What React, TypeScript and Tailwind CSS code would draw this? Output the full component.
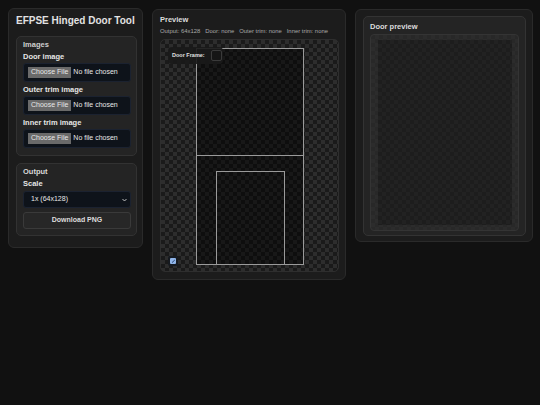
import React from "react";

const checker =
  "bg-[repeating-conic-gradient(#2d2d2d_0%_25%,#1a1a1a_0%_50%)] bg-[length:8px_8px]";

function FileField({ label }: { label: string }) {
  return (
    <div className="mt-[3px]">
      <p className="text-[7.5px] font-bold leading-[9px] text-[#e6e6e6]">{label}</p>
      <div className="mt-[2px] flex h-[19px] w-[108px] items-center rounded-[3px] border border-[#1b2230] bg-[#0e131a] pl-[4px]">
        <span className="flex h-[11px] items-center bg-[#6a6a6a] px-[3px] text-[7px] text-[#e8e8e8]">
          Choose File
        </span>
        <span className="ml-[2px] text-[7px] text-[#e8e8e8]">No file chosen</span>
      </div>
    </div>
  );
}

export default function App() {
  return (
    <div
      className="flex h-[405px] w-[540px] items-start gap-[9px] bg-[#111111] pl-[8px] pt-[8px]"
      style={{ fontFamily: '"Liberation Sans", Arial, sans-serif' }}
    >
      {/* controls */}
      <div className="flex h-[240px] w-[135px] flex-col rounded-[6px] border border-[#2a2a2a] bg-[#1c1c1c] px-[7px] pt-[5px]">
        <h1 className="whitespace-nowrap text-[10px] font-bold leading-[14px] text-[#e2e2e2]">
          EFPSE Hinged Door Tool
        </h1>
        <div className="mt-[8px] w-[121px] rounded-[5px] border border-[#323232] bg-[#242424] px-[6px] pb-[7px] pt-[3px]">
          <p className="text-[7.5px] font-bold leading-[9px] text-[#cfcfcf]">Images</p>
          <FileField label="Door image" />
          <FileField label="Outer trim image" />
          <FileField label="Inner trim image" />
        </div>
        <div className="mt-[7px] w-[121px] rounded-[5px] border border-[#323232] bg-[#242424] px-[6px] pb-[6px] pt-[3px]">
          <p className="text-[7.5px] font-bold leading-[9px] text-[#d8d8d8]">Output</p>
          <p className="mt-[3px] text-[7.5px] font-bold leading-[9px] text-[#e6e6e6]">Scale</p>
          <div className="mt-[3px] flex h-[17px] w-[108px] items-center justify-between rounded-[3px] border border-[#1b2230] bg-[#0e131a] pl-[7px] pr-[3px]">
            <span className="text-[7px] text-[#e8e8e8]">1x (64x128)</span>
            <svg width="5" height="4" viewBox="0 0 5 4">
              <path d="M0.5 1 L2.5 3 L4.5 1" stroke="#cfcfcf" strokeWidth="0.9" fill="none" />
            </svg>
          </div>
          <button
            type="button"
            className="mt-[4px] flex h-[17px] w-[108px] items-center justify-center rounded-[3px] border border-[#3a3a3a] bg-[#272727] text-[7px] font-bold text-[#dcdcdc]"
          >
            Download PNG
          </button>
        </div>
      </div>

      {/* preview */}
      <div className="mt-[1px] h-[271px] w-[194px] rounded-[6px] border border-[#2a2a2a] bg-[#1c1c1c] px-[7px] pt-[5px]">
        <p className="text-[7.5px] font-bold leading-[9px] text-[#dcdcdc]">Preview</p>
        <p className="mt-[3px] whitespace-nowrap text-[5.9px] leading-[8px] text-[#a8a8a8]">
          Output: 64x128&nbsp;&nbsp;&nbsp;Door: none&nbsp;&nbsp;&nbsp;Outer trim: none&nbsp;&nbsp;&nbsp;Inner trim: none
        </p>
        <div className={`relative mt-[4px] h-[233px] w-[179px] rounded-[5px] border border-[#2e2e2e] ${checker}`}>
          <div className="absolute left-[35px] top-[8px] h-[217px] w-[108px] border border-[#9a9a9a] bg-black/45">
            <div className="h-[107px] border-b border-[#9a9a9a]" />
            <div className="absolute bottom-[-1px] left-[19px] h-[94px] w-[69px] border border-[#9a9a9a]" />
          </div>
          <div className="absolute left-[7px] top-[7px] flex h-[17px] w-[55px] items-center rounded-[4px] bg-[#1a1a1a]/90 pl-[4px]">
            <span className="text-[5.5px] font-bold text-[#e0e0e0]">Door Frame:</span>
            <span className="ml-[6px] h-[11px] w-[11px] rounded-[2px] border border-[#3a3a3a] bg-[#151515]" />
          </div>
          <div className="absolute left-[7px] top-[216px] flex h-[10px] w-[10px] items-center justify-center rounded-[2px] bg-[#161a20]">
            <div className="flex h-[6px] w-[6px] items-center justify-center rounded-[1px] bg-[#8fb4e8]">
              <svg width="5" height="5" viewBox="0 0 5 5">
                <path d="M1 3.6 L3.8 1" stroke="#1e3a66" strokeWidth="0.9" fill="none" />
              </svg>
            </div>
          </div>
        </div>
      </div>

      {/* door preview */}
      <div className="mt-[1px] h-[233px] w-[178px] rounded-[6px] border border-[#2a2a2a] bg-[#1c1c1c] px-[7px] pt-[6px]">
        <div className="h-[220px] w-[163px] rounded-[5px] border border-[#333333] bg-[#242424] px-[6px] pt-[5px]">
          <p className="text-[7.5px] font-bold leading-[9px] text-[#dcdcdc]">Door preview</p>
          <div className="mt-[3px] h-[197px] w-[149px] rounded-[4px] border border-[#343434] bg-[repeating-conic-gradient(#2c2c2c_0%_25%,#282828_0%_50%)] bg-[length:8px_8px] pl-[7px] pr-[6px] pt-[5px]">
            <div className="h-[185px] w-full bg-[repeating-conic-gradient(#222222_0%_25%,#1d1d1d_0%_50%)] bg-[length:8px_8px]" />
          </div>
        </div>
      </div>
    </div>
  );
}
